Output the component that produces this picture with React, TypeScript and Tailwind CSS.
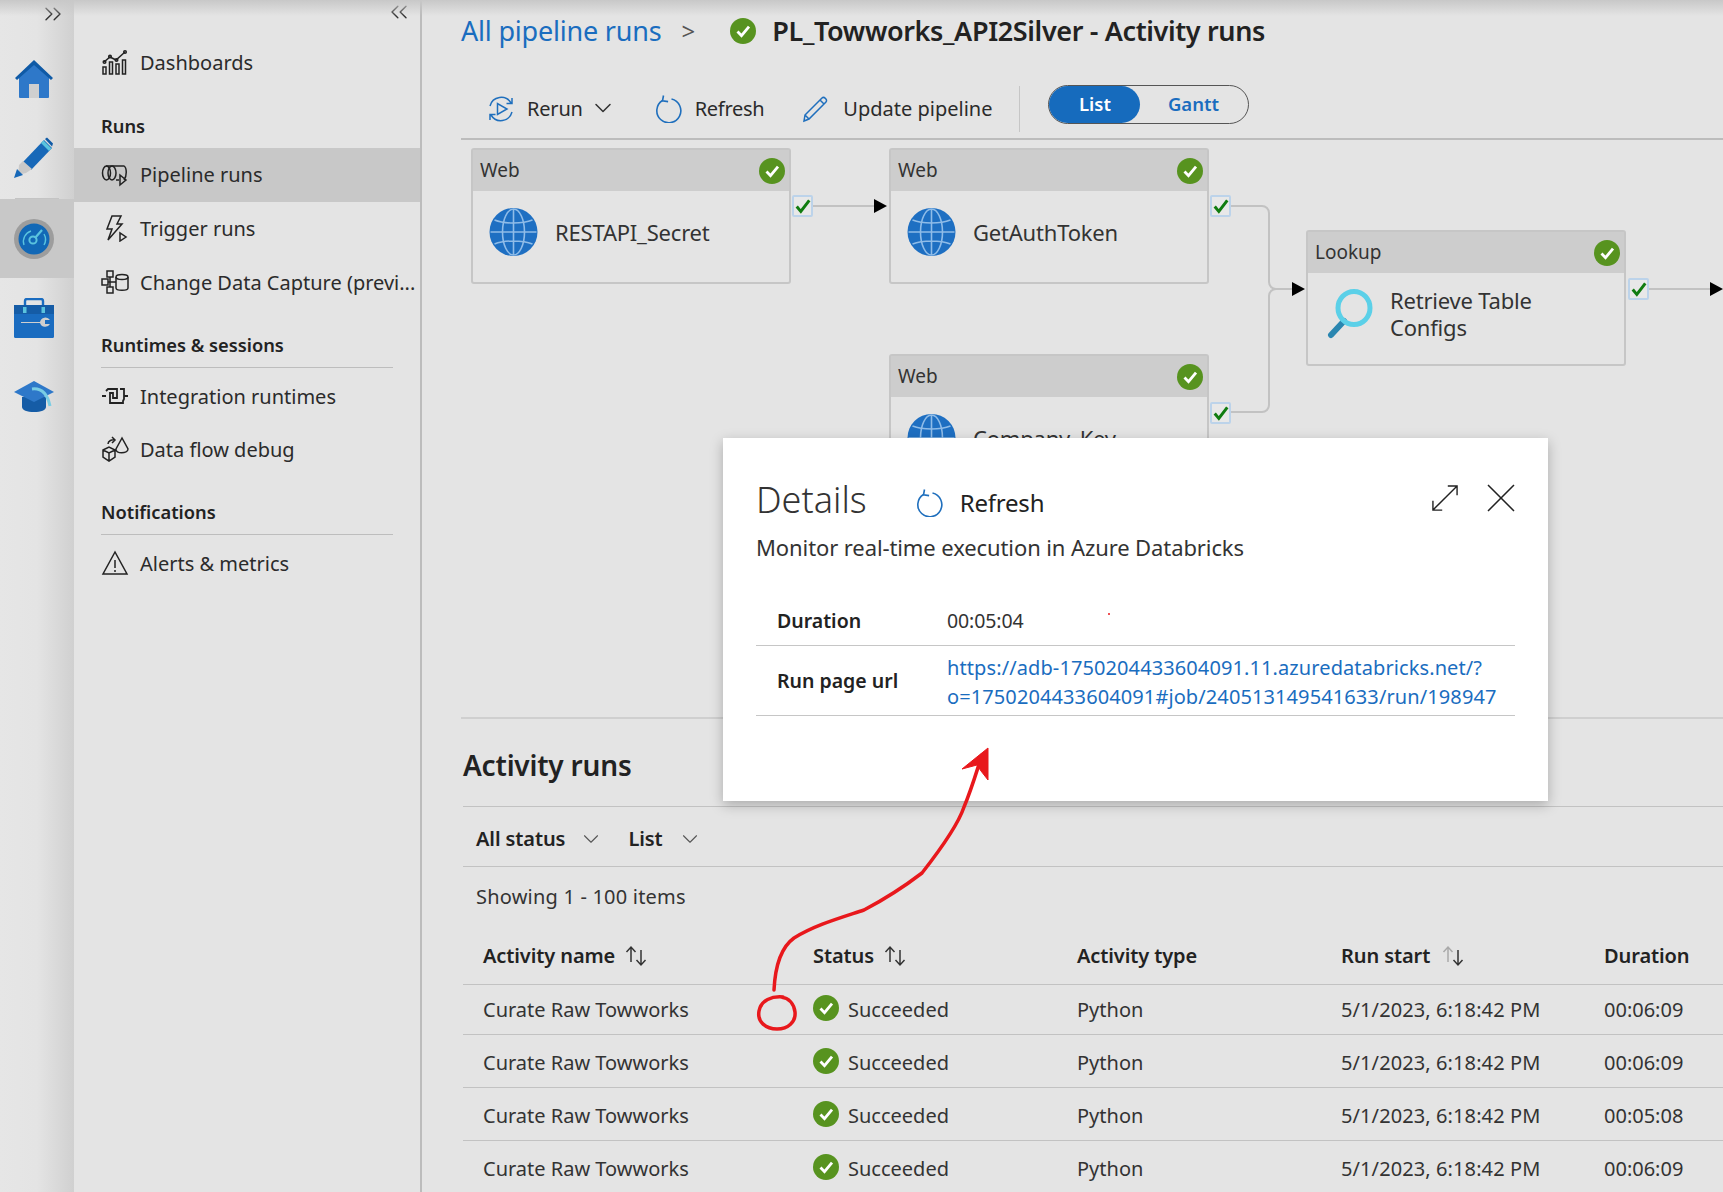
import { ChevronDown, ChevronsLeft, ChevronsRight } from "lucide-react"

const CheckDot = ({ className = "w-[26px] h-[26px]" }: { className?: string }) => (
  <svg viewBox="0 0 26 26" className={className}>
    <circle cx="13" cy="13" r="13" fill="#57931f" />
    <path d="M7.5 13.5l4 4.2 7.5-9" fill="none" stroke="#fff" strokeWidth="2.8" />
  </svg>
)

const Globe = () => (
  <svg viewBox="0 0 48 48" className="w-[49px] h-[48px] shrink-0">
    <circle cx="24" cy="24" r="24" fill="#1e6fc2" />
    <g fill="none" stroke="#8fbce8" strokeWidth="1.6">
      <ellipse cx="24" cy="24" rx="11" ry="23" />
      <path d="M24 1v46M1 24h46M5 12c10 4 28 4 38 0M5 36c10-4 28-4 38 0" />
    </g>
  </svg>
)

const Magnifier = () => (
  <svg viewBox="0 0 46 50" className="w-[46px] h-[50px] shrink-0 ml-[3px]">
    <path d="M4 46l13-14" stroke="#2a86b0" strokeWidth="6" strokeLinecap="round" />
    <ellipse cx="27" cy="19" rx="16" ry="16.5" fill="none" stroke="#5bd0e8" strokeWidth="5" />
  </svg>
)

const SpinIcon = ({ className }: { className: string }) => (
  <svg viewBox="0 0 28 28" className={className} fill="none" stroke="#1f6fbd" strokeWidth="1.6">
    <path d="M8.5 5.5a12 12 0 1 0 9-1.5" />
    <path d="M9.5 .5l-1 5.4 5.6.7" />
  </svg>
)

const SortIcon = ({ faded = false }: { faded?: boolean }) => (
  <svg viewBox="0 0 26 22" className="w-[26px] h-[22px]" fill="none" strokeWidth="1.5">
    <path d="M8 17V2M3.5 7L8 2l4.5 5" stroke={faded ? "#a9a9a9" : "#333"} />
    <path d="M18 5v15M13.5 15l4.5 5 4.5-5" stroke="#333" />
  </svg>
)

const Port = () => (
  <div className="w-[21px] h-[22px] flex items-center justify-center border-2 border-[#bcd3ea] rounded-[2px] bg-[#e8e8e8]">
    <svg viewBox="0 0 14 14" className="w-[16px] h-[16px] shrink-0">
      <path d="M1.5 7.5l3.6 4.2L12.5 2" fill="none" stroke="#107c10" strokeWidth="2.6" />
    </svg>
  </div>
)

const NavIcon = ({ children }: { children: React.ReactNode }) => (
  <svg viewBox="0 0 28 28" className="w-[28px] h-[28px] shrink-0 -mt-[2px]" fill="none" stroke="#222" strokeWidth="1.5">
    {children}
  </svg>
)

const NavItem = ({ icon, label, tall = false, active = false }: { icon: React.ReactNode; label: string; tall?: boolean; active?: boolean }) => (
  <div className={`${tall ? "h-[54px]" : "h-[53px]"} pl-[27px] flex items-center gap-[11px] whitespace-nowrap overflow-hidden text-[#2b2b2b] ${active ? "bg-[#c8c8c8]" : ""}`}>
    {icon}
    <span className="text-[20px]">{label}</span>
  </div>
)

const NavHeading = ({ label, line = true }: { label: string; line?: boolean }) => (
  <div className={`h-[59px] mx-[27px] flex items-end pb-[9px] text-[18.3px] font-semibold text-[#222] ${line ? "border-b border-[#bdbdbd]" : ""}`}>
    {label}
  </div>
)

const Node = ({ kind, label, left, top, icon }: { kind: string; label: React.ReactNode; left: string; top: string; icon: React.ReactNode }) => (
  <div className={`absolute ${left} ${top} w-[320px] h-[136px] border-2 border-[#c6c6c6] rounded-[3px] bg-[#e4e4e4]`}>
    <div className="h-[41px] bg-[#cdcdcd] flex items-center justify-between pl-[7px] pr-[4px] text-[19px] text-[#333]">
      <span>{kind}</span>
      <CheckDot />
    </div>
    <div className="h-[64px] mt-[9px] flex items-center pl-[16px] gap-[17px] text-[22px] leading-[27px] text-[#333] tracking-[-0.2px]">
      {icon}
      <span>{label}</span>
    </div>
  </div>
)

const rows = ["00:06:09", "00:06:09", "00:05:08", "00:06:09"]
const gridCols = "grid grid-cols-[350px_264px_264px_263px_1fr] items-center border-b border-[#c2c2c2]"

export default function App() {
  return (
    <div className="relative w-[1723px] h-[1192px] overflow-hidden flex bg-[#e4e4e4] font-['Noto_Sans',sans-serif] text-[#222]">
      {/* icon rail */}
      <div className="relative w-[74px] shrink-0 bg-gradient-to-r from-[#e6e6e6] via-[#e4e4e4] to-[#d0d0d0]">
        <div className="h-[40px] flex justify-end pr-[7px]">
          <ChevronsRight className="w-[28px] h-[28px] text-[#333]" strokeWidth={1.2} />
        </div>
        <div className="h-[78px] flex items-center pl-[14px]">
          <svg viewBox="0 0 40 40" className="w-[40px] h-[40px]">
            <path d="M5 18L20 4l15 14v20a1 1 0 0 1-1 1H6a1 1 0 0 1-1-1z" fill="#2e78c9" />
            <path d="M1 19L20 1l19 18-2 2L20 6 3 21z" fill="#0f5aa6" />
            <rect x="15" y="25" width="10" height="14" fill="#cfcfcf" />
          </svg>
        </div>
        <div className="h-[80px] flex items-center pl-[14px]">
          <svg viewBox="0 0 40 42" className="w-[40px] h-[42px]">
            <path d="M9 25L30 3l8 8-21 22z" fill="#1768b8" />
            <path d="M27 6l8 8 2.5-2.5-8-8z" fill="#5ac3de" />
            <path d="M31 2l2-1.5 6 6-1 3z" fill="#0f5aa6" />
            <path d="M5 28l4-4 9 8-6 4-8 2z" fill="#c9c9c9" />
            <path d="M0 41l3-9 6 6z" fill="#1768b8" />
          </svg>
        </div>
        <div className="h-px mx-[15px] bg-[#c4c4c4]" />
        <div className="h-[79px] bg-[#c8c8c8] flex items-center pl-[14px]">
          <svg viewBox="0 0 40 40" className="w-[40px] h-[40px]">
            <circle cx="20" cy="20" r="20" fill="#9d9d9d" />
            <circle cx="20" cy="20" r="15.5" fill="#1268b6" />
            <circle cx="19" cy="21" r="3.6" fill="none" stroke="#5ac3de" strokeWidth="2" />
            <path d="M21 19l7-8" stroke="#5ac3de" strokeWidth="2.2" />
            <path d="M10 26a11 11 0 0 1 7-14" fill="none" stroke="#5ac3de" strokeWidth="1.4" />
            <path d="M30 15a11 11 0 0 1 0 11" fill="none" stroke="#5ac3de" strokeWidth="1.4" />
          </svg>
        </div>
        <div className="h-[80px] flex items-center pl-[14px]">
          <svg viewBox="0 0 40 40" className="w-[40px] h-[40px]">
            <path d="M11 9V3a2 2 0 0 1 2-2h14a2 2 0 0 1 2 2v6" fill="none" stroke="#1a6cc0" strokeWidth="2.4" />
            <rect x="0" y="7" width="40" height="33" rx="1.5" fill="#1a6cc0" />
            <rect x="0" y="7" width="40" height="9" fill="#155ca6" />
            <rect x="9" y="9" width="3.5" height="6" fill="#5ac3de" />
            <rect x="27.5" y="9" width="3.5" height="6" fill="#5ac3de" />
            <path d="M7 24h19a5.5 5.5 0 0 1 10-2h-5v4h5a5.5 5.5 0 0 1-10-1H7z" fill="#cfcfcf" />
          </svg>
        </div>
        <div className="h-[78px] flex items-center pl-[14px]">
          <svg viewBox="0 0 40 32" className="w-[40px] h-[32px]">
            <path d="M8 16v10c0 3 5 5 12 5s12-2 12-5V16z" fill="#155ca6" />
            <path d="M0 11L20 0l20 11-20 10z" fill="#2e78c9" />
            <path d="M18 8c8-1 15 3 18 17" fill="none" stroke="#79cde4" strokeWidth="3" />
          </svg>
        </div>
      </div>

      {/* nav panel */}
      <div className="w-[348px] shrink-0 border-r-2 border-[#bcbcbc]">
        <div className="h-[36px] flex justify-end pr-[7px]">
          <ChevronsLeft className="w-[28px] h-[28px] -mt-[2px] text-[#333]" strokeWidth={1.2} />
        </div>
        <NavItem
          label="Dashboards"
          icon={
            <NavIcon>
              <path d="M2 19h3v7H2zM8.500 14h3v12h-3zM15 16h3v10h-3zM21.500 12h3v14h-3zM3 14l6-5 6 3 9-8" />
              <circle cx="3.500" cy="14" r="1.300" />
              <circle cx="9" cy="8.500" r="1.300" />
              <circle cx="15.500" cy="12" r="1.300" />
              <circle cx="24" cy="4" r="1.300" />
            </NavIcon>
          }
        />
        <NavHeading label="Runs" line={false} />
        <NavItem
          active
          tall
          label="Pipeline runs"
          icon={
            <NavIcon>
              <ellipse cx="5.500" cy="13" rx="4" ry="7" />
              <ellipse cx="11" cy="13" rx="4" ry="7" />
              <path d="M5 6h18c3 2 3 10 0 14M15 20h3M19 15v10l6-5z" />
            </NavIcon>
          }
        />
        <NavItem
          tall
          label="Trigger runs"
          icon={
            <NavIcon>
              <path d="M11 2h9l-4 8h5L7 26l4-11H6zM19 19v8l6-4z" />
            </NavIcon>
          }
        />
        <NavItem
          label="Change Data Capture (previ..."
          icon={
            <NavIcon>
              <path d="M6 3h6v6H6zM1 11h6v6H1zM6 19h6v6H6zM7 14h8M9 9v10" />
              <ellipse cx="21" cy="9" rx="6" ry="2.500" />
              <path d="M15 9v11c0 3 12 3 12 0V9" />
            </NavIcon>
          }
        />
        <NavHeading label="Runtimes & sessions" />
        <div className="h-[2px]" />
        <NavItem
          label="Integration runtimes"
          icon={
            <NavIcon>
              <path d="M1 14h4M23 14h4M5 9l2-2h9v9h-4v-5H9v10h13v-2l1-2V7h-4" strokeWidth="1.800" />
            </NavIcon>
          }
        />
        <NavItem
          label="Data flow debug"
          icon={
            <NavIcon>
              <path d="M2 15l6-3 6 3v7l-6 4-6-4zM2 15l6 3 6-3M8 18v8M21 3l-6 11c-1 5 12 5 12 0zM7 9c0-3 4-5 7-4M11 2l3 3-3 3" />
            </NavIcon>
          }
        />
        <NavHeading label="Notifications" />
        <div className="h-[2px]" />
        <NavItem
          label="Alerts & metrics"
          icon={
            <NavIcon>
              <path d="M14 3L2 25h24zM14 11v8M14 21v2" />
            </NavIcon>
          }
        />
      </div>

      {/* main */}
      <div className="relative flex-1 min-w-0">
        <div className="h-[64px] pl-[39px] pb-[2px] flex items-center whitespace-nowrap">
          <span className="text-[27px] text-[#1a6dbf] tracking-[-0.2px]">All pipeline runs</span>
          <span className="ml-[20px] text-[24px] text-[#555]">&gt;</span>
          <CheckDot className="w-[26px] h-[26px] ml-[35px]" />
          <span className="ml-[16px] text-[27px] font-semibold tracking-[-0.36px]">PL_Towworks_API2Silver - Activity runs</span>
        </div>

        <div className="h-[76px] ml-[39px] pt-[16px] border-b-2 border-[#bcbcbc] flex items-center text-[20px] text-[#2b2b2b]">
          <svg viewBox="0 0 28 28" className="w-[28px] h-[28px] ml-[26px]" fill="none" stroke="#1f6fbd" strokeWidth="1.500">
            <path d="M3 11a11.500 11.500 0 0 1 21-3M25 3v5.500h-5.500M25 17a11.500 11.500 0 0 1-21 3M3 25v-5.500h5.500M10.500 8.500v11L20 14z" />
          </svg>
          <span className="ml-[12px] tracking-[-0.2px]">Rerun</span>
          <ChevronDown className="w-[28px] h-[28px] ml-[6px] -mt-[2px] text-[#333]" strokeWidth={1.3} />
          <SpinIcon className="w-[28px] h-[28px] ml-[37px]" />
          <span className="ml-[13px] tracking-[-0.3px]">Refresh</span>
          <svg viewBox="0 0 28 28" className="w-[28px] h-[28px] ml-[38px]" fill="none" stroke="#1f6fbd" strokeWidth="1.500">
            <path d="M3 20L20 3c2-2 6 2 4 4L7 24l-5 2zM3 20l4 4M18 5l4 4" />
          </svg>
          <span className="ml-[13px] whitespace-nowrap">Update pipeline</span>
          <div className="w-px h-[46px] bg-[#c6c6c6] ml-[27px]" />
          <div className="ml-[28px] w-[201px] h-[39px] rounded-full border border-[#555] flex items-center text-[18.5px] font-semibold -mt-[10px]">
            <div className="w-[91px] h-full rounded-full bg-[#166bbd] text-white flex items-center justify-center">List</div>
            <div className="flex-1 text-center text-[#1a6dbf] pr-[2px]">Gantt</div>
          </div>
        </div>

        {/* pipeline canvas */}
        <div className="relative h-[579px] ml-[39px] border-b-2 border-[#cfcfcf]">
          <Node kind="Web" label="RESTAPI_Secret" left="left-[10px]" top="top-[8px]" icon={<Globe />} />
          <Node kind="Web" label="GetAuthToken" left="left-[428px]" top="top-[8px]" icon={<Globe />} />
          <Node kind="Web" label="Company_Key" left="left-[428px]" top="top-[214px]" icon={<Globe />} />
          <Node kind="Lookup" label={<>Retrieve Table<br />Configs</>} left="left-[845px]" top="top-[90px]" icon={<Magnifier />} />
          <svg className="absolute inset-0 w-full h-full" fill="none" stroke="#c2c2c2" strokeWidth="2">
            <path d="M352 66h62" />
            <path d="M770 66h31a7 7 0 0 1 7 7v69a7 7 0 0 0 7 7h16" />
            <path d="M770 272h31a7 7 0 0 0 7-7V156a7 7 0 0 1 7-7" />
            <path d="M1187 149h62" />
            <path d="M413 59l13 7-13 7zM831 142l13 7-13 7zM1249 142l13 7-13 7z" fill="#000" stroke="none" />
          </svg>
          <div className="absolute left-[331px] top-[55px]"><Port /></div>
          <div className="absolute left-[749px] top-[55px]"><Port /></div>
          <div className="absolute left-[749px] top-[262px]"><Port /></div>
          <div className="absolute left-[1167px] top-[138px]"><Port /></div>
        </div>

        {/* activity runs */}
        <div className="ml-[41px] text-[20px] text-[#333]">
          <div className="h-[88px] pt-[4px] flex items-center border-b border-[#c2c2c2] text-[28px] font-semibold text-[#222] tracking-[-0.2px]">
            Activity runs
          </div>
          <div className="h-[60px] pt-[4px] pl-[13px] flex items-center border-b border-[#c2c2c2] font-semibold text-[#222] tracking-[-0.1px]">
            <span>All status</span>
            <ChevronDown className="w-[26px] h-[26px] ml-[13px] text-[#555]" strokeWidth={1} />
            <span className="ml-[24px]">List</span>
            <ChevronDown className="w-[26px] h-[26px] ml-[14px] text-[#555]" strokeWidth={1} />
          </div>
          <div className="h-[60px] pl-[13px] flex items-center tracking-[0.2px]">Showing 1 - 100 items</div>
          <div className={`${gridCols} h-[58px] font-semibold text-[#222] tracking-[-0.1px]`}>
            <div className="pl-[20px] flex items-center gap-[8px]">Activity name <SortIcon /></div>
            <div className="flex items-center gap-[8px]">Status <SortIcon /></div>
            <div>Activity type</div>
            <div className="flex items-center gap-[10px]">Run start <SortIcon faded /></div>
            <div>Duration</div>
          </div>
          {rows.map((dur, i) => (
            <div key={i} className={`${gridCols} ${i === 0 ? "h-[50px]" : "h-[53px] pt-[3px]"}`}>
              <div className="pl-[20px]">Curate Raw Towworks</div>
              <div className="flex items-center gap-[9px]"><CheckDot className="w-[26px] h-[26px] -mt-[3px]" /> Succeeded</div>
              <div>Python</div>
              <div className="tracking-[0.1px]">5/1/2023, 6:18:42 PM</div>
              <div>{dur}</div>
            </div>
          ))}
        </div>

        {/* details popup */}
        <div className="absolute left-[301px] top-[438px] w-[825px] h-[363px] bg-white shadow-[0_4px_12px_rgba(0,0,0,0.25)] pt-[38px] px-[33px] text-[#333]">
          <div className="h-[48px] flex items-center">
            <span className="text-[36px] font-light text-[#333]">Details</span>
            <SpinIcon className="w-[28px] h-[28px] ml-[48px] mt-[6px]" />
            <span className="ml-[17px] mt-[6px] text-[24px] text-[#222] tracking-[-0.2px]">Refresh</span>
            <svg viewBox="0 0 28 28" className="w-[26px] h-[26px] ml-auto -mt-[4px]" fill="none" stroke="#222" strokeWidth="1.500">
              <path d="M1 27L27 1M17 1h10v10M1 17v10h10" />
            </svg>
            <svg viewBox="0 0 28 28" className="w-[28px] h-[28px] ml-[29px] -mt-[4px]" fill="none" stroke="#222" strokeWidth="1.500">
              <path d="M1 1l26 26M27 1L1 27" />
            </svg>
          </div>
          <div className="mt-[8px] h-[30px] flex items-center text-[22px] tracking-[-0.1px]">Monitor real-time execution in Azure Databricks</div>
          <div className="mt-[35px] h-[49px] grid grid-cols-[191px_1fr] items-center border-b border-[#c6c6c6] text-[19.5px]">
            <span className="pl-[21px] font-semibold text-[#222]">Duration</span>
            <span className="tracking-[-0.1px]">00:05:04</span>
          </div>
          <div className="h-[70px] grid grid-cols-[191px_1fr] items-center border-b border-[#c6c6c6] text-[20px]">
            <span className="pl-[21px] pt-[1px] text-[19.5px] font-semibold text-[#222]">Run page url</span>
            <span className="pt-[2px] text-[#1a6dbf] leading-[29px] whitespace-nowrap tracking-[0.1px]">
              https://adb-1750204433604091.11.azuredatabricks.net/?<br />o=1750204433604091#job/240513149541633/run/198947
            </span>
          </div>
        </div>
      </div>

      {/* top edge shadow */}
      <div className="absolute inset-x-0 top-0 h-[16px] bg-gradient-to-b from-[#c8c8c8] to-transparent pointer-events-none" />

      {/* red hand annotation */}
      <svg className="absolute inset-0 w-full h-full pointer-events-none" viewBox="0 0 1723 1192" fill="none" stroke="#e8181c">
        <path d="M774 990C775 970 780 948 794 938C815 925 840 918 864 910C885 899 905 886 922 873C940 850 958 825 964 807C972 788 977 770 982 755" strokeWidth="3.500" strokeLinecap="round" />
        <path d="M988 748l-26 21 15-4 4 6 7 9z" fill="#e8181c" strokeWidth="1" />
        <path d="M783 997c-11-1-22 3-24 14-2 11 7 18 18 18 11 0 19-7 18-17-1-8-6-14-14-15" strokeWidth="3.500" strokeLinecap="round" />
        <circle cx="1109" cy="614" r="1" fill="#e8181c" stroke="none" />
      </svg>
    </div>
  )
}
